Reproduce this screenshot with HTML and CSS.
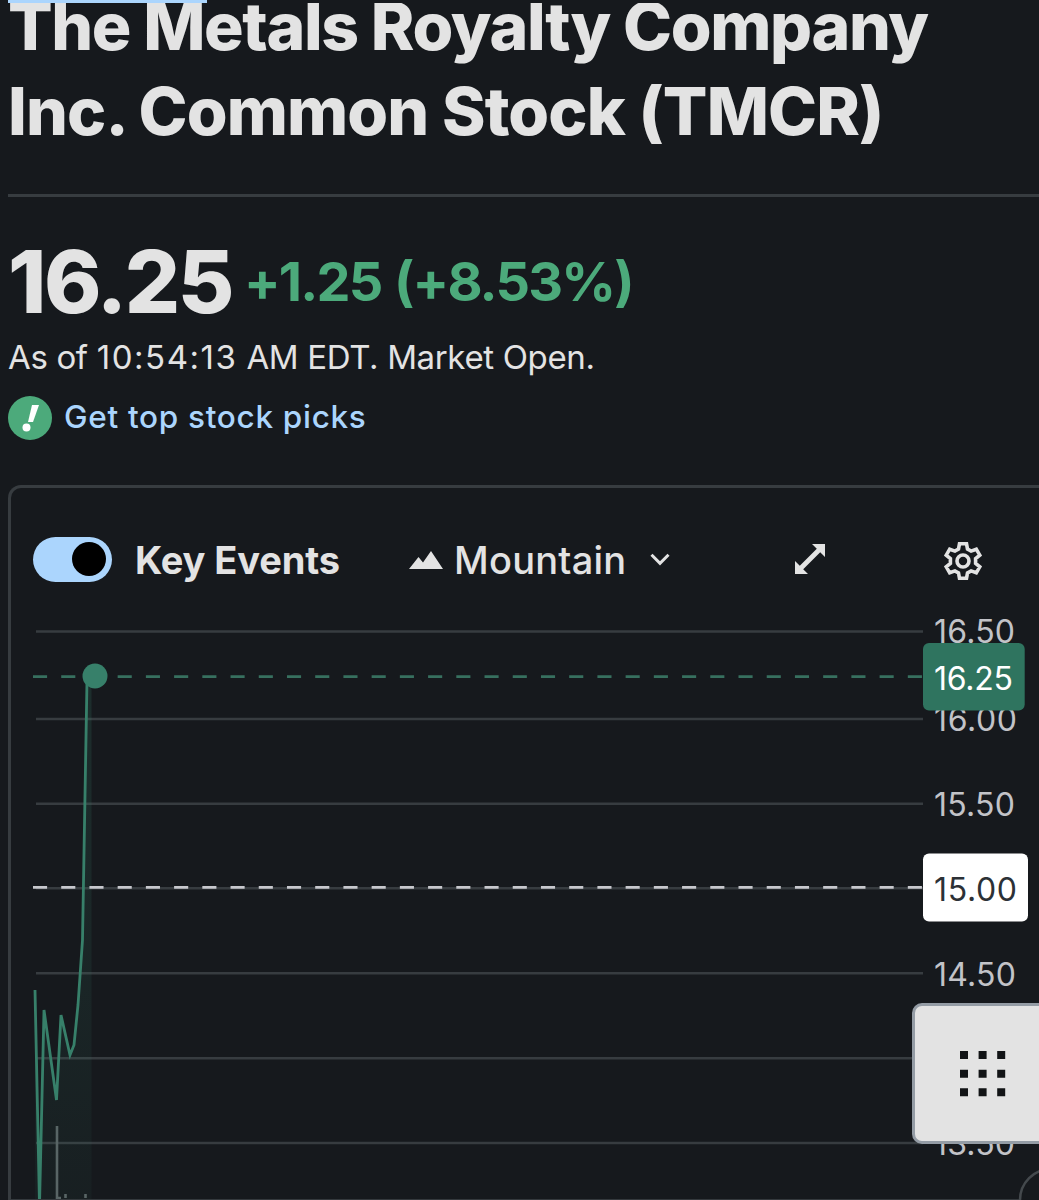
FILE: index.html
```html
<!DOCTYPE html>
<html lang="en">
<head>
    <meta charset="UTF-8">
    <meta name="viewport" content="width=device-width, initial-scale=1.0">
    <title>The Metals Royalty Company Inc. (TMCR)</title>
    <link rel="stylesheet" href="styles.css">
</head>
<body>

    <div class="tab-line"></div>
    <header class="header">
        <h1><span class="line-one">The Metals Royalty Company</span><br><span class="line-two">Inc. Common Stock (TMCR)</span></h1>
    </header>

    <section class="quote">
        <div class="price-row">
            <span class="price">16.25</span>
            <span class="change">+1.25</span>
            <span class="percent">(+8.53%)</span>
        </div>
        <p class="as-of">As of <span class="time">10:54:13</span> AM EDT. Market Open.</p>
        <a class="picks">
            <svg width="44" height="44" viewBox="0 0 44 44">
                <circle cx="22" cy="22" r="22" fill="#4caa7b"/>
                <path d="M24 9h7l-6 17h-5z" fill="#fff"/>
                <circle cx="18.500" cy="31.500" r="4" fill="#fff"/>
            </svg>
            <span>Get top stock picks</span>
        </a>
    </section>

    <main class="card">
        <div class="toolbar">
            <div class="toggle"><div class="knob"></div></div>
            <span class="key-events">Key Events</span>
            <div class="chart-type">
                <svg width="34" height="18" viewBox="0 0 34 18">
                    <path d="M0 18L9.500 6l4.500 5.500L22 0l12 18z" fill="#e3e3e3"/>
                </svg>
                <span>Mountain</span>
                <svg class="chevron" width="20" height="13" viewBox="0 0 20 13">
                    <path d="M1.500 1.800L10 10.300l8.500-8.500" fill="none" stroke="#e3e3e3" stroke-width="3"/>
                </svg>
            </div>
            <svg class="expand" width="30" height="30" viewBox="0 0 30 30">
                <path d="M17 0h13v13l-4.800-4.800L8.200 25.200 13 30H0V17l4.800 4.800L21.800 4.800z" fill="#e3e3e3"/>
            </svg>
            <svg class="gear" width="38" height="38" viewBox="-19 -19 38 38">
                <path d="M-3.500-17.300h7l1 5.300 3.600 2.100 5.200-1.900 3.500 6-4.200 3.500v4.600l4.200 3.500-3.500 6-5.200-1.900-3.600 2.100-1 5.300h-7l-1-5.300-3.600-2.100-5.200 1.900-3.500-6 4.200-3.500v-4.600l-4.200-3.500 3.500-6 5.200 1.900 3.600-2.100z" fill="none" stroke="#e3e3e3" stroke-width="3.600"/>
                <circle r="6" fill="none" stroke="#e3e3e3" stroke-width="3.600"/>
            </svg>
        </div>

        <svg class="chart" width="1028" height="600" viewBox="11 600 1028 600">
            <defs>
                <linearGradient id="area" x1="0" y1="676" x2="0" y2="1200" gradientUnits="userSpaceOnUse">
                    <stop offset="0" stop-color="#37806a" stop-opacity="0.2"/>
                    <stop offset="1" stop-color="#37806a" stop-opacity="0.06"/>
                </linearGradient>
            </defs>

            <!-- grid -->
            <path class="grid" d="M36 631.500H923M36 719H923M36 803.700H923M36 888.200H923M36 973.300H923M36 1058.300H923M36 1143H923"/>

            <!-- volume -->
            <path class="volume" d="M57 1126v72h4M65.500 1194v4M85.500 1194v4"/>

            <!-- price -->
            <path fill="url(#area)" d="M35 990L39.500 1200L44 1010L56.500 1100L61 1015L70 1055L74 1045L78 1005L82.500 940L87 676H91.500V1200H35z"/>
            <path class="line" d="M35 990L39.500 1205L44 1010L56.500 1100L61 1015L70 1055L74 1045L78 1005L82.500 940L87 680L95 676"/>
            <path class="dash current" d="M33 676.700H923"/>
            <path class="dash previous" d="M33 887.300H923"/>
            <circle cx="95" cy="676" r="12.500" fill="#37806a"/>

            <!-- y axis -->
            <g class="axis">
                <text x="934" y="643" textLength="81">16.50</text>
                <text x="934" y="731" textLength="83">16.00</text>
                <text x="934" y="816" textLength="81">15.50</text>
                <text x="934" y="985.500" textLength="82">14.50</text>
                <text x="934" y="1154.500" textLength="81">13.50</text>
            </g>
            <rect x="923" y="643" width="101.700" height="67.500" rx="6" fill="#2f745f"/>
            <text class="tag" x="934" y="689.500" textLength="79" fill="#fff">16.25</text>
            <rect x="923" y="853.500" width="105" height="68" rx="6" fill="#fff"/>
            <text class="tag" x="934" y="900.500" textLength="83" fill="#2c3136">15.00</text>

            <path d="M11 1199.500H1039" stroke="#34393d" stroke-width="1"/>
            <circle cx="1051" cy="1200" r="31" fill="#16191d" stroke="#44494d" stroke-width="2.500"/>
        </svg>
    </main>

    <button class="apps">
        <svg width="46" height="46" viewBox="0 0 46 46">
            <path d="M0 0h8v8H0zM18.600 0h8v8h-8zM37.200 0h8v8h-8zM0 18.700h8v8H0zM18.600 18.700h8v8h-8zM37.200 18.700h8v8h-8zM0 37.300h8v8H0zM18.600 37.300h8v8h-8zM37.200 37.300h8v8h-8z" fill="#121416"/>
        </svg>
    </button>

</body>
</html>
```
FILE: styles.css
```css
* {
    box-sizing: border-box;
}
body {
    margin: 0;
    width: 1039px;
    height: 1200px;
    overflow: hidden;
    position: relative;
    background-color: #16191d;
    color: #e3e3e3;
    font-family: Inter, "Liberation Sans", sans-serif;
}
.tab-line {
    width: 199px;
    height: 3px;
    margin-left: 8px;
    background-color: #abd5fd;
}
.header {
    height: 194px;
    margin-left: 8px;
    overflow: hidden;
    border-bottom: 3px solid #373c40;
}
h1 {
    margin: -19px 0 0;
    font-size: 66px;
    line-height: 84.5px;
    font-weight: 800;
    white-space: nowrap;
}
.line-one {
    letter-spacing: -1.37px;
}
.line-two {
    letter-spacing: -0.88px;
}
.quote {
    height: 288px;
    padding: 31px 0 0 8px;
}
.price-row {
    display: flex;
    align-items: center;
    height: 106px;
    white-space: nowrap;
    font-weight: 700;
}
.price {
    width: 236px;
    font-size: 87px;
    font-weight: 800;
    letter-spacing: -2.5px;
}
.change {
    width: 150px;
    font-size: 54px;
    letter-spacing: -1.8px;
    color: #4caa7b;
}
.percent {
    font-size: 54px;
    letter-spacing: -1.8px;
    color: #4caa7b;
}
.as-of {
    margin: 4px 0 0;
    font-size: 33px;
    line-height: 39px;
    letter-spacing: -0.35px;
    white-space: nowrap;
}
.time {
    letter-spacing: 1.55px;
}
.picks {
    display: flex;
    align-items: center;
    gap: 12px;
    margin-top: 19px;
    font-size: 31.5px;
    font-weight: 550;
    letter-spacing: 0.7px;
    color: #abd5fd;
}
.picks span {
    padding-bottom: 3px;
}
.card {
    height: 715px;
    margin-left: 8px;
    border: solid #373c40;
    border-width: 3px 0 0 3px;
    border-top-left-radius: 13px;
}
.toolbar {
    display: flex;
    align-items: center;
    height: 112px;
    padding: 32px 0 0 22px;
    white-space: nowrap;
}
.toggle {
    width: 79px;
    height: 45px;
    margin-bottom: 2px;
    padding: 5.5px 5px;
    border-radius: 23px;
    background-color: #abd5fd;
}
.knob {
    width: 34px;
    height: 34px;
    margin-left: 34px;
    border-radius: 50%;
    background-color: #000;
}
.key-events {
    width: 297px;
    padding-left: 23px;
    font-size: 38px;
    font-weight: 700;
    letter-spacing: -0.1px;
}
.chart-type {
    display: flex;
    align-items: center;
    width: 386px;
    font-size: 38px;
    font-weight: 550;
    letter-spacing: 0.25px;
}
.chart-type span {
    width: 207px;
    padding-left: 11px;
}
.chevron,
.expand {
    margin-bottom: 2px;
}
.gear {
    margin-top: 2px;
    margin-left: 119px;
}
.chart {
    display: block;
}
.grid {
    fill: none;
    stroke: #373c40;
    stroke-width: 2.6;
}
.volume {
    fill: none;
    stroke: #5b6365;
    stroke-width: 2.6;
}
.line {
    fill: none;
    stroke: #37806a;
    stroke-width: 2.8;
}
.dash {
    fill: none;
    stroke-width: 2.8;
    stroke-dasharray: 14.1 14.12;
}
.current {
    stroke: #37705f;
}
.previous {
    stroke: #c7c8cd;
}
.axis text {
    font-size: 32px;
    fill: #c2c3c8;
}
.tag {
    font-size: 32px;
}
.apps {
    position: absolute;
    top: 1003px;
    right: -11px;
    width: 138px;
    height: 141px;
    padding: 0 0 0 45px;
    border: 3px solid #949ca5;
    border-radius: 10px;
    background-color: #e3e3e3;
    text-align: left;
}
.apps svg {
    display: block;
}
```
